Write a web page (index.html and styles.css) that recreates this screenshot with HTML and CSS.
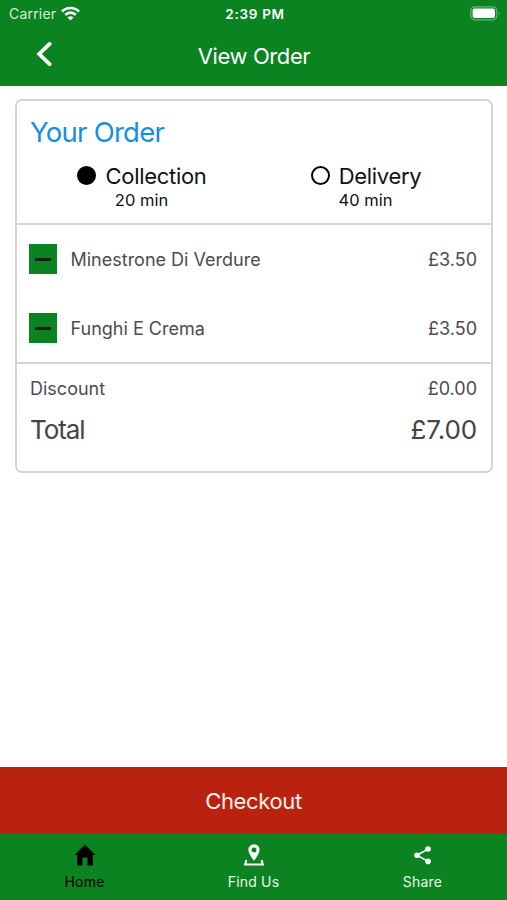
FILE: index.html
```html
<!DOCTYPE html>
<html lang="en">
<head>
<meta charset="utf-8">
<title>View Order</title>
<link rel="stylesheet" href="styles.css">
</head>
<body>
<div class="app">
  <header class="header">
    <div class="status">
      <div class="carrier"><span>Carrier</span>
        <svg class="wifi" viewBox="0 0 18 14" width="19" height="15"><g fill="none" stroke="#fff" stroke-width="2.5"><path d="M.9 5.1a11.5 11.5 0 0 1 16.2 0"/><path d="M4 8.3a7 7 0 0 1 10 0"/></g><path fill="#fff" d="M9 13.6 6.1 10.7a4.1 4.1 0 0 1 5.8 0z"/></svg>
      </div>
      <span class="time">2:39 PM</span>
      <svg class="battery" viewBox="0 0 31 15" width="31" height="15"><rect x=".8" y=".8" width="26" height="13" rx="4" fill="none" stroke="#68b574" stroke-width="1.2"/><rect x="2.6" y="2.6" width="22.4" height="9.4" rx="2" fill="#fff"/><path d="M28.6 5.2q2 2.1 0 4.2z" fill="#68b574"/></svg>
    </div>
    <div class="navbar">
      <svg class="back" viewBox="0 0 16 26" width="16" height="26"><path d="M13.6 2.900 3.200 13l10.400 10.100" fill="none" stroke="#fff" stroke-width="3.800" stroke-linecap="round"/></svg>
      <h1 class="title">View Order</h1>
    </div>
  </header>
  <main class="content">
    <section class="card">
      <div class="methods">
        <h2 class="heading">Your Order</h2>
        <div class="options">
          <div class="option"><div class="choice"><i class="radio radio-on"></i><span>Collection</span></div><div class="eta">20 min</div></div>
          <div class="option"><div class="choice"><i class="radio"></i><span>Delivery</span></div><div class="eta">40 min</div></div>
        </div>
      </div>
      <div class="items">
        <div class="item"><button class="remove" aria-label="Remove"></button><span class="name">Minestrone Di Verdure</span><span class="price">£3.50</span></div>
        <div class="item"><button class="remove" aria-label="Remove"></button><span class="name">Funghi E Crema</span><span class="price">£3.50</span></div>
      </div>
      <div class="summary">
        <div class="discount"><span>Discount</span><span>£0.00</span></div>
        <div class="total"><span class="total-label">Total</span><span class="total-value">£7.00</span></div>
      </div>
    </section>
  </main>
  <button class="checkout">Checkout</button>
  <nav class="tabs">
    <div class="tab active"><svg viewBox="0 0 24 24" width="24" height="24"><path d="M12 1.800 22.400 12h-2.600V22.600h-5.200v-8.200H9.400v8.200H4.200V12H1.600z" fill="#000"/></svg><span>Home</span></div>
    <div class="tab"><svg viewBox="0 0 24 24" width="24" height="24"><path fill="#fff" fill-rule="evenodd" d="M12 1.200a5.600 5.600 0 0 0-5.600 5.600c0 4.200 5.600 11 5.600 11s5.600-6.800 5.600-11A5.600 5.600 0 0 0 12 1.200zm0 3.300a2.500 2.500 0 1 1 0 5 2.500 2.500 0 0 1 0-5z"/><path d="M4.400 17 3.200 21.400h17.600L19.600 17" fill="none" stroke="#fff" stroke-width="2"/></svg><span>Find Us</span></div>
    <div class="tab"><svg viewBox="0 0 24 24" width="24" height="24"><path d="M17 6 6 12.200l11 6.200" fill="none" stroke="#fff" stroke-width="1.600"/><g fill="#fff"><circle cx="17" cy="6" r="2.800"/><circle cx="6" cy="12.200" r="2.800"/><circle cx="17" cy="18.400" r="2.800"/></g></svg><span>Share</span></div>
  </nav>
</div>
</body>
</html>
```
FILE: styles.css
```css
* { box-sizing: border-box; }
body { margin: 0; font-family: Inter, "Liberation Sans", sans-serif; background: #fff; }
button { border: 0; padding: 0; font: inherit; }
h1, h2 { margin: 0; font-weight: 400; }
svg { display: block; flex: none; }
.app { height: 900px; display: flex; flex-direction: column; }
.header { height: 86px; background: #0a8320; color: #fff; }
.status { height: 27px; display: grid; grid-template-columns: 1fr auto 1fr; align-items: center; padding: 0 6px 0 9px; font-size: 14px; }
.carrier { display: flex; align-items: center; gap: 5px; color: #d9efdc; letter-spacing: .2px; }
.wifi { margin-top: -1px; }
.time { font-weight: 600; font-size: 13.5px; letter-spacing: .7px; }
.battery { justify-self: end; }
.navbar { height: 57px; display: grid; grid-template-columns: 1fr auto 1fr; align-items: center; padding: 0 35px 0 36px; }
.back { margin-top: -3px; }
.title { font-size: 22px; line-height: 30px; letter-spacing: -.4px; }
.content { flex: 1; padding: 13px 14px 0 15px; }
.card { height: 374px; border: 2px solid #d4d4d4; border-radius: 7px; }
.methods { height: 124px; border-bottom: 2px solid #d4d4d4; padding: 13px 13px 0; }
.heading { font-size: 27.5px; line-height: 36px; letter-spacing: -.75px; color: #168fdf; }
.options { display: grid; grid-template-columns: 1fr 1fr; margin-top: 12px; color: #111; }
.option { text-align: center; }
.choice { display: flex; justify-content: center; align-items: center; gap: 9px; font-size: 22px; line-height: 28px; letter-spacing: -.3px; }
.radio { width: 19px; height: 19px; margin-top: -2px; border: 2px solid #000; border-radius: 50%; }
.radio-on { background: #000; }
.eta { font-size: 16.5px; line-height: 20px; margin-left: -1px; }
.items { height: 139px; border-bottom: 2px solid #d4d4d4; color: #4c4c4c; }
.item { height: 69px; display: flex; align-items: center; padding: 0 14px 0 12px; font-size: 18px; }
.remove { width: 28px; height: 30px; background: #0a8320; display: grid; place-items: center; margin: -1px 13.5px 0 0; }
.remove::before { content: ""; width: 16px; height: 3px; background: #0c2410; }
.name { flex: 1; }
.summary { padding: 11px 14px 0 13px; color: #4c4c4c; }
.discount, .total { display: flex; justify-content: space-between; }
.discount { font-size: 18px; line-height: 28px; }
.total { font-size: 26px; line-height: 36px; margin-top: 9px; color: #444; }
.total-label { letter-spacing: -1.1px; }
.total-value { letter-spacing: -.1px; }
.checkout { height: 67px; background: #b8220f; color: #fff0ec; font-size: 22px; letter-spacing: -.35px; }
.tabs { height: 66px; background: #0a8320; display: grid; grid-template-columns: repeat(3, 1fr); font-size: 14px; letter-spacing: .2px; color: #e8f8e8; }
.tab { display: flex; flex-direction: column; align-items: center; padding-top: 9px; gap: 6px; line-height: 18px; }
.active { color: #000; }
```
